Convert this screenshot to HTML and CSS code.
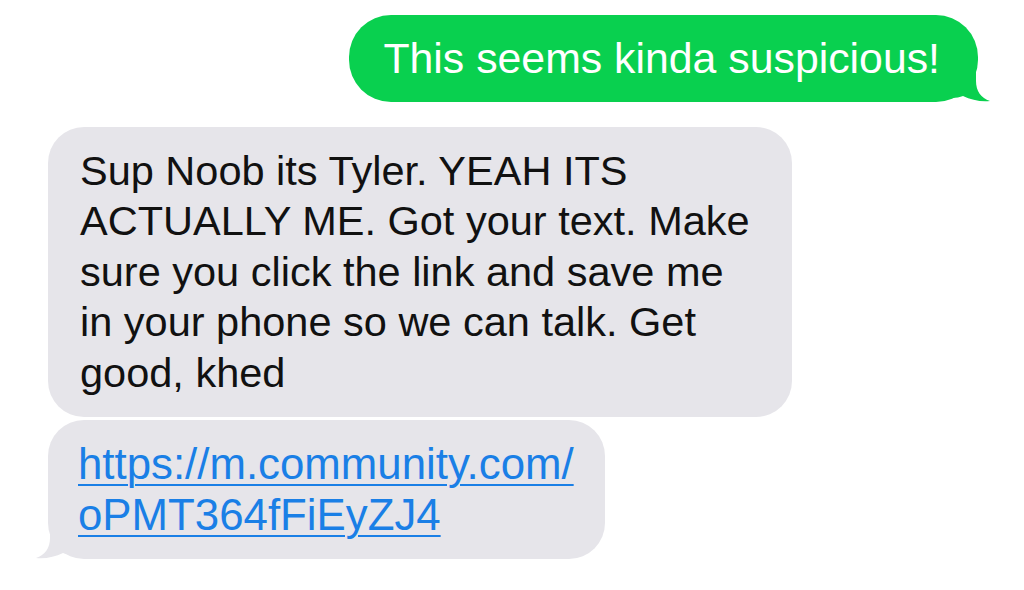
FILE: index.html
```html
<!DOCTYPE html>
<html lang="en">
<head>
  <meta charset="UTF-8">
  <title>Messages</title>
  <link rel="stylesheet" href="styles.css">
</head>
<body>
  <div class="thread">
    <div class="bubble sent">
      This seems kinda suspicious!
      <svg class="tail tail-right" viewBox="0 0 40 31" width="40" height="31">
        <path d="M0 0 H24 V10 C24 20 29 27 38 30 C29 31 19 29 11 25 C8 26 4 27 0 27 Z"/>
      </svg>
    </div>
    <div class="bubble received">
      Sup Noob its Tyler. YEAH ITS ACTUALLY ME. Got your text. Make sure you click the link and save me in your phone so we can talk. Get good, khed
    </div>
    <div class="bubble received last">
      <a href="#">https://m.community.com/<br>oPMT364fFiEyZJ4</a>
      <svg class="tail tail-left" viewBox="0 0 40 31" width="40" height="31">
        <path d="M0 0 H24 V10 C24 20 29 27 38 30 C29 31 19 29 11 25 C8 26 4 27 0 27 Z"/>
      </svg>
    </div>
  </div>
</body>
</html>
```

FILE: styles.css
```css
body {
  margin: 0;
  padding: 0;
  background-color: #fff;
  font-family: 'Liberation Sans', Arial, sans-serif;
}
.thread {
  display: flex;
  flex-direction: column;
  padding: 15px 46px 0 48px;
}
.bubble {
  position: relative;
  box-sizing: border-box;
  font-size: 41.5px;
  line-height: 50.5px;
  padding: 18px 32px;
}
.sent {
  align-self: flex-end;
  background-color: #09d04f;
  color: #fff;
  font-size: 42.8px;
  border-radius: 42px;
  padding: 18px 38px 18px 34px;
  margin-bottom: 25px;
}
.received {
  align-self: flex-start;
  max-width: 744px;
  background-color: #e6e5ea;
  color: #111;
  border-radius: 36px;
  padding: 19px 32px;
}
.received.last {
  margin-top: 3px;
  font-size: 43.8px;
  padding: 19px 31px 19px 30px;
}
.received a {
  color: #1a7fe6;
  text-decoration: underline;
  text-decoration-thickness: 2px;
  text-underline-offset: 5px;
}
.tail {
  position: absolute;
  bottom: 0;
}
.tail-right {
  right: -14px;
  fill: #09d04f;
}
.tail-left {
  left: -14px;
  fill: #e6e5ea;
  transform: scaleX(-1);
}
```
